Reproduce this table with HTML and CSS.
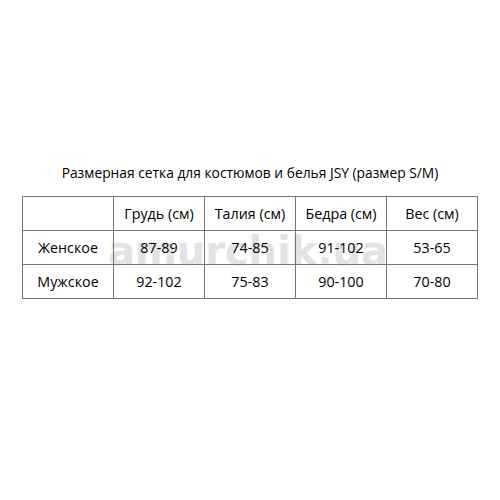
FILE: index.html
```html
<!DOCTYPE html>
<html>
<head>
<meta charset="utf-8">
<link rel="stylesheet" href="styles.css">
</head>
<body>
<div class="page">
  <h1 class="title">Размерная сетка для костюмов и белья JSY (размер S/M)</h1>
  <div class="table-wrap">
    <table class="sizes">
      <tr>
        <td></td>
        <td>Грудь (см)</td>
        <td>Талия (см)</td>
        <td>Бедра (см)</td>
        <td>Вес (см)</td>
      </tr>
      <tr>
        <td>Женское</td>
        <td>87-89</td>
        <td>74-85</td>
        <td>91-102</td>
        <td>53-65</td>
      </tr>
      <tr>
        <td>Мужское</td>
        <td>92-102</td>
        <td>75-83</td>
        <td>90-100</td>
        <td>70-80</td>
      </tr>
    </table>
    <div class="watermark">amurchik.ua</div>
  </div>
</div>
</body>
</html>
```
FILE: styles.css
```css
html, body {
  margin: 0;
  padding: 0;
  background: #fff;
}
.page {
  width: 500px;
  height: 500px;
  display: flex;
  flex-direction: column;
  align-items: center;
  padding-top: 164px;
  box-sizing: border-box;
  font-family: "Open Sans", "DejaVu Sans", sans-serif;
  color: #000;
}
.title {
  margin: 0 0 14px 0;
  font-size: 13.8px;
  font-weight: normal;
  line-height: 18px;
  text-align: center;
}
.table-wrap {
  position: relative;
}
.sizes {
  position: relative;
  z-index: 1;
  border-collapse: collapse;
  width: 455px;
  table-layout: fixed;
}
.sizes td {
  border: 1px solid #777;
  height: 33px;
  padding: 0;
  text-align: center;
  font-size: 14.3px;
  width: 90px;
}
.watermark {
  position: absolute;
  left: 86px;
  top: 30px;
  z-index: 0;
  font-family: "DejaVu Sans", sans-serif;
  font-weight: bold;
  font-size: 40px;
  color: #e3e3e3;
  line-height: 50px;
}
```
